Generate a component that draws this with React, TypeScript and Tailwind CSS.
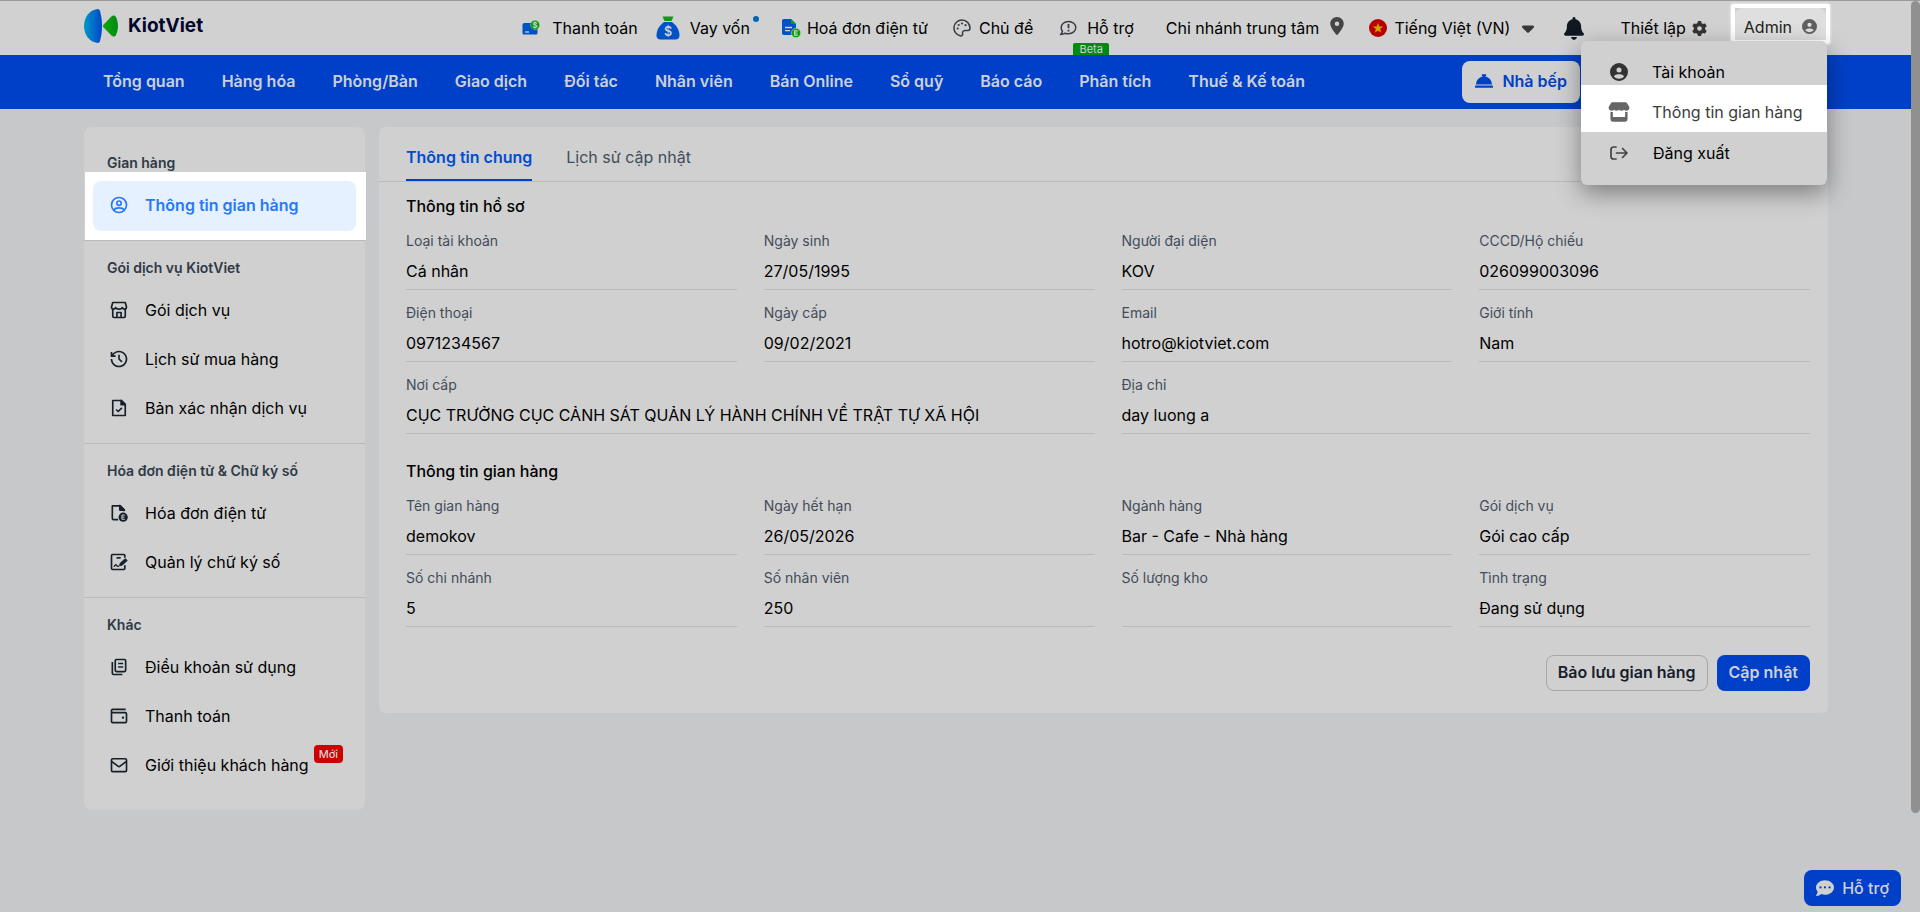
import type { ReactNode } from 'react';
import { FaBell, FaCaretDown, FaCircleUser, FaCommentDots, FaGear, FaLocationDot, FaStore } from 'react-icons/fa6';
import { FaConciergeBell } from 'react-icons/fa';
import { RiHistoryLine } from 'react-icons/ri';

interface LineIconProps {
  children: ReactNode;
  className?: string;
}

function LineIcon({ children, className = 'size-5' }: LineIconProps) {
  return (
    <svg
      viewBox="0 0 24 24"
      className={className}
      fill="none"
      stroke="currentColor"
      strokeWidth="2"
      strokeLinejoin="round"
      aria-hidden="true"
    >
      {children}
    </svg>
  );
}

const icons = {
  account: (
    <LineIcon>
      <circle cx="12" cy="12" r="9" />
      <circle cx="12" cy="9.8" r="2.6" />
      <path d="M5.8 17.8c1.2-1.8 3.4-2.3 6.2-2.3s5 .5 6.2 2.3" />
    </LineIcon>
  ),
  shop: (
    <LineIcon>
      <path d="M4.5 3h15L21 8.5c0 1.5-1 2.5-2.4 2.5S16.400 10 16 9c-.4 1-2 2-4 2s-3.600-1-4-2c-.4 1-1.200 2-2.600 2S3 10 3 8.500z" />
      <path d="M4.500 11v8.500c0 .8.700 1.500 1.500 1.500h12c.8 0 1.500-.7 1.500-1.500V11" />
      <path d="M9.500 21v-6h5v6" />
    </LineIcon>
  ),
  history: <RiHistoryLine className="size-5" />,
  fileCheck: (
    <LineIcon>
      <path d="M4.500 3H15l4.500 4.500V21h-15z" />
      <path d="M14.500 3v5h5z" fill="currentColor" />
      <path d="M8.500 13.800l2.500 2.400 4.500-4.400" />
    </LineIcon>
  ),
  invoice: (
    <LineIcon>
      <path d="M11 20H5.500C4.700 20 4 19.300 4 18.500V3.500h9.500L18 8v2" />
      <path d="M13 3v5.500h5.500z" fill="currentColor" />
      <circle cx="17" cy="17" r="5.500" fill="currentColor" stroke="none" />
      <path d="M19 14.500h-3.500v5H19M15.500 17h3" stroke="#d0d0d0" strokeWidth="1.200" />
    </LineIcon>
  ),
  signature: (
    <LineIcon>
      <path d="M19 7V4.500c0-.8-.5-1.500-1.300-1.500H4.300C3.500 3 3 3.700 3 4.500v15c0 .8.500 1.500 1.300 1.500h13.400c.8 0 1.300-.7 1.300-1.500V16" />
      <path d="M9 7h5" />
      <path d="M6 17.500c1.500-2.500 2.500-2.800 3-1.500s1.200 1.500 3 1" strokeWidth="1.600" />
      <path d="M12.500 16.500l1-3.200 6-5.300 2.500 2.200-6.200 5.600z" fill="currentColor" strokeWidth="1" />
    </LineIcon>
  ),
  terms: (
    <LineIcon>
      <rect x="7.500" y="3" width="12.500" height="14.500" rx="1.500" />
      <path d="M4 6v13.500c0 .8.700 1.500 1.500 1.500H16M11 7.800h6M11 12h6" />
    </LineIcon>
  ),
  wallet: (
    <LineIcon>
      <path d="M20 4H4.500C3.700 4 3 4.700 3 5.500v13c0 .8.700 1.500 1.500 1.500h15c.8 0 1.500-.7 1.500-1.500v-9c0-.8-.7-1.500-1.500-1.500H3" />
      <path d="M15.500 14H18" strokeWidth="2.500" />
    </LineIcon>
  ),
  mail: (
    <LineIcon>
      <rect x="3" y="4.500" width="18" height="15.500" rx="1.500" />
      <path d="M3.500 8l7.200 5.400c.8.600 1.800.6 2.600 0L20.500 8" />
    </LineIcon>
  ),
};

interface MenuItem {
  label: string;
  icon: ReactNode;
  badge?: string;
}

interface MenuGroup {
  title: string;
  items: MenuItem[];
}

const menuGroups: MenuGroup[] = [
  {
    title: 'Gói dịch vụ KiotViet',
    items: [
      { label: 'Gói dịch vụ', icon: icons.shop },
      { label: 'Lịch sử mua hàng', icon: icons.history },
      { label: 'Bản xác nhận dịch vụ', icon: icons.fileCheck },
    ],
  },
  {
    title: 'Hóa đơn điện tử & Chữ ký số',
    items: [
      { label: 'Hóa đơn điện tử', icon: icons.invoice },
      { label: 'Quản lý chữ ký số', icon: icons.signature },
    ],
  },
  {
    title: 'Khác',
    items: [
      { label: 'Điều khoản sử dụng', icon: icons.terms },
      { label: 'Thanh toán', icon: icons.wallet },
      { label: 'Giới thiệu khách hàng', icon: icons.mail, badge: 'Mới' },
    ],
  },
];

const navItems = [
  'Tổng quan',
  'Hàng hóa',
  'Phòng/Bàn',
  'Giao dịch',
  'Đối tác',
  'Nhân viên',
  'Bán Online',
  'Sổ quỹ',
  'Báo cáo',
  'Phân tích',
  'Thuế & Kế toán',
];

interface Field {
  label: string;
  value: string;
  wide?: boolean;
}

const profileFields: Field[] = [
  { label: 'Loại tài khoản', value: 'Cá nhân' },
  { label: 'Ngày sinh', value: '27/05/1995' },
  { label: 'Người đại diện', value: 'KOV' },
  { label: 'CCCD/Hộ chiếu', value: '026099003096' },
  { label: 'Điện thoại', value: '0971234567' },
  { label: 'Ngày cấp', value: '09/02/2021' },
  { label: 'Email', value: 'hotro@kiotviet.com' },
  { label: 'Giới tính', value: 'Nam' },
  { label: 'Nơi cấp', value: 'CỤC TRƯỞNG CỤC CẢNH SÁT QUẢN LÝ HÀNH CHÍNH VỀ TRẬT TỰ XÃ HỘI', wide: true },
  { label: 'Địa chỉ', value: 'day luong a', wide: true },
];

const storeFields: Field[] = [
  { label: 'Tên gian hàng', value: 'demokov' },
  { label: 'Ngày hết hạn', value: '26/05/2026' },
  { label: 'Ngành hàng', value: 'Bar - Cafe - Nhà hàng' },
  { label: 'Gói dịch vụ', value: 'Gói cao cấp' },
  { label: 'Số chi nhánh', value: '5' },
  { label: 'Số nhân viên', value: '250' },
  { label: 'Số lượng kho', value: '' },
  { label: 'Tình trạng', value: 'Đang sử dụng' },
];

function FieldGrid({ fields }: { fields: Field[] }) {
  return (
    <dl className="grid grid-cols-4 gap-x-[27px]">
      {fields.map((field) => (
        <div
          key={field.label}
          className={`border-b border-[#bababb] pt-[13px] pb-[6px] ${field.wide ? 'col-span-2' : ''}`}
        >
          <dt className="text-sm leading-5 text-[#424c5a]">{field.label}</dt>
          <dd className="mt-2 h-6 leading-6">{field.value}</dd>
        </div>
      ))}
    </dl>
  );
}

function Logo() {
  return (
    <a href="#" className="flex items-center gap-[10px]">
      <svg viewBox="0 0 34 34" className="size-[34px]" aria-hidden="true">
        <defs>
          <linearGradient id="logo-blue" x1="0" y1="0" x2="1" y2="0">
            <stop offset="0" stopColor="#0098c8" />
            <stop offset="1" stopColor="#0046c8" />
          </linearGradient>
          <linearGradient id="logo-green" x1="0" y1="0" x2="1" y2="0">
            <stop offset="0" stopColor="#0aa80c" />
            <stop offset="1" stopColor="#058a10" />
          </linearGradient>
        </defs>
        <path d="M13.500 0C5.500 1 0 8 0 17s5.500 16 13.500 17c1.500 0 2-.8 2.500-2 2.700-9.500 2.700-20.500 0-30-.5-1.200-1-2-2.500-2z" fill="url(#logo-blue)" />
        <path d="M19.400 15.700l8-8.300c1.700-1.500 3.600-1.100 4.600.6 2.600 5.500 2.600 12.500 0 18-1 1.700-2.900 2.100-4.600.6l-8-8.300c-.7-.8-.7-1.800 0-2.600z" fill="url(#logo-green)" />
      </svg>
      <span className="text-[19px] leading-6 font-bold text-[#02062c]">KiotViet</span>
    </a>
  );
}

function PaymentIcon() {
  return (
    <svg viewBox="0 0 18 16" className="h-4 w-[18px]" aria-hidden="true">
      <path d="M2.500 3H9a4.600 4.600 0 0 0 6.500 6V13c0 1-.5 1.500-1.500 1.500H2c-1 0-1.500-.5-1.500-1.500V5c0-1.200.8-2 2-2z" fill="#0052c6" />
      <path d="M3 12h4" stroke="#d0d0d0" strokeWidth="1.300" />
      <circle cx="13" cy="5" r="4.500" fill="#0a9c12" />
      <text x="13" y="7.800" fontSize="7.500" fontWeight="700" textAnchor="middle" fill="#d0d0d0">$</text>
    </svg>
  );
}

function MoneyBagIcon() {
  return (
    <svg viewBox="0 0 24 24" className="size-6" aria-hidden="true">
      <path d="M6.500.5h11L15.500 5h-7z" fill="#0a9c12" />
      <path d="M8 6h8c5 3.500 7.500 8.500 7.500 13.500 0 2.700-1.500 4-4 4h-15c-2.500 0-4-1.300-4-4C.5 14.500 3 9.500 8 6z" fill="#0052c6" />
      <text x="12" y="19.500" fontSize="12.500" fontWeight="600" textAnchor="middle" fill="#d0d0d0">$</text>
    </svg>
  );
}

function InvoiceIcon() {
  return (
    <svg viewBox="0 0 20 20" className="size-5" aria-hidden="true">
      <path d="M3 1h7l5 5v7l-3 4H3c-1.500 0-2-.8-2-2V3c0-1.200.5-2 2-2z" fill="#0052c6" />
      <path d="M10 1l5 5h-5z" fill="#0a9c12" />
      <path d="M4 9.500h7M4 12.700h5" stroke="#d0d0d0" strokeWidth="1.300" />
      <circle cx="15" cy="15" r="4.700" fill="#0a9c12" stroke="#d0d0d0" strokeWidth=".6" />
      <path d="M16.800 12.900h-3.200v4.200h3.200M13.600 15h2.800" stroke="#d0d0d0" strokeWidth="1.100" fill="none" />
    </svg>
  );
}

function PaletteIcon() {
  return (
    <svg viewBox="0 0 18 18" className="size-[18px]" fill="none" stroke="#383d42" strokeWidth="1.500" aria-hidden="true">
      <path d="M9 1a8 8 0 0 0-1.800 15.800c1.600.4 2.600-.7 2.400-2-.3-1.900.5-3.300 2.300-3.400h3c1.200 0 2.100-.8 2.100-2.200C16.900 4.600 13.500 1 9 1z" />
      <g fill="#383d42" stroke="none">
        <circle cx="4.700" cy="9.500" r="1.100" />
        <circle cx="5.700" cy="6" r="1.100" />
        <circle cx="9" cy="4.500" r="1.100" />
        <circle cx="12.500" cy="6.200" r="1.100" />
      </g>
    </svg>
  );
}

function SupportIcon() {
  return (
    <svg viewBox="0 0 18 16" className="h-4 w-[18px]" fill="none" stroke="#383d42" strokeWidth="1.500" aria-hidden="true">
      <path d="M9.500 1.500c4.200 0 7.300 2.600 7.300 6s-3.100 6.300-7.300 6.300c-1.200 0-2.200-.2-3.200-.6-1.300.8-2.900 1.300-4.800 1.300 1-.8 1.700-2 1.900-3.200C2.600 10.200 2.200 8.900 2.200 7.500c0-3.400 3.100-6 7.300-6z" strokeLinejoin="round" />
      <path d="M9.500 4v4.200M9.500 9.700v1.800" strokeWidth="1.800" />
    </svg>
  );
}

function FlagIcon() {
  return (
    <svg viewBox="0 0 18 18" className="size-[18px]" aria-hidden="true">
      <circle cx="9" cy="9" r="9" fill="#b90000" />
      <path d="M9 3.800l1.300 3.700h3.900l-3.100 2.400 1.100 3.800L9 11.400l-3.200 2.300 1.100-3.800-3.100-2.400h3.900z" fill="#d6a400" />
    </svg>
  );
}

function LogoutIcon() {
  return (
    <svg viewBox="0 0 20 16" className="h-4 w-5" fill="none" stroke="#444" strokeWidth="1.700" strokeLinecap="round" strokeLinejoin="round" aria-hidden="true">
      <path d="M7 2H4.500C3 2 2 3 2 4.500v7C2 13 3 14 4.500 14H7M7.500 8H18M13.500 3.500L18 8l-4.500 4.500" />
    </svg>
  );
}

function UserMenu() {
  return (
    <div className="relative z-20 -mr-[2px] ml-6">
      <div className="h-10 rounded-xs border-4 border-white shadow-[0_0_2px_1px_rgba(255,255,255,0.5)]">
        <button type="button" className="flex h-8 w-full items-center gap-[10px] rounded-t-lg bg-[#dfdfdf] px-[9px] pt-[5px] leading-6 text-[#222]">
          Admin
          <FaCircleUser className="size-[15px] text-[#606060]" />
        </button>
      </div>
      <div className="absolute top-[37px] right-[3px] w-[246px] rounded-md bg-[#d0d0d0] pt-[3px] pb-[11px] shadow-[0_8px_24px_rgba(0,0,0,0.4)]">
        <a href="#" className="flex h-[41px] items-center gap-6 pt-[14px] pl-[29px]">
          <FaCircleUser className="size-[18px] text-[#333]" />
          <span className="leading-6">Tài khoản</span>
        </a>
        <a href="#" className="flex h-[47px] items-center gap-[22px] bg-white pt-[6px] pl-[27px] text-[#3c3c3c]">
          <FaStore className="h-5 w-[22px] text-[#666]" />
          <span className="leading-6">Thông tin gian hàng</span>
        </a>
        <a href="#" className="flex h-[42px] items-center gap-6 pl-7">
          <LogoutIcon />
          <span className="leading-6">Đăng xuất</span>
        </a>
      </div>
    </div>
  );
}

function TopBar() {
  return (
    <header className="flex h-[55px] items-center justify-between border-t border-[#9a9a9a] bg-[#d1d1d1] pr-[92px] pl-[84px]">
      <div className="pb-1">
        <Logo />
      </div>
      <div className="flex h-full items-center whitespace-nowrap">
        <a href="#" className="flex items-center gap-3">
          <PaymentIcon />
          Thanh toán
        </a>
        <a href="#" className="relative ml-[18px] flex items-center gap-[10px]">
          <MoneyBagIcon />
          Vay vốn
          <span className="absolute top-0 -right-[9px] size-[6px] rounded-full bg-[#0067b5]" />
        </a>
        <a href="#" className="ml-[31px] flex items-center gap-[6px]">
          <InvoiceIcon />
          Hoá đơn điện tử
        </a>
        <a href="#" className="ml-[25px] flex items-center gap-2">
          <PaletteIcon />
          Chủ đề
        </a>
        <a href="#" className="relative ml-[26px] flex h-full items-center gap-[10px]">
          <SupportIcon />
          Hỗ trợ
          <span className="absolute bottom-0 left-[14px] h-3 w-9 rounded-t-xs bg-[#058a10] text-center text-[11px] leading-3 text-[#d0d0d0]">
            Beta
          </span>
        </a>
        <button type="button" className="ml-8 flex items-center gap-[11px]">
          Chi nhánh trung tâm
          <FaLocationDot className="mb-1 h-[18px] w-[14px] text-[#444]" />
        </button>
        <button type="button" className="ml-[25px] flex items-center gap-[7px]">
          <FlagIcon />
          Tiếng Việt (VN)
          <FaCaretDown className="ml-[5px] h-5 w-3 text-[#383838]" />
        </button>
        <button type="button" aria-label="Thông báo" className="ml-[30px]">
          <FaBell className="h-[23px] w-5 text-[#101820]" />
        </button>
        <button type="button" className="ml-9 flex items-center gap-[6px]">
          Thiết lập
          <FaGear className="size-[15px] text-[#333]" />
        </button>
        <div className="pb-2">
          <UserMenu />
        </div>
      </div>
    </header>
  );
}

function NavBar() {
  return (
    <nav className="flex h-[54px] items-center bg-[#0040c8] pr-[92px] pl-[103px] font-semibold text-[#cdd0d8]">
      <div className="flex gap-[37px] pb-0.5">
        {navItems.map((item) => (
          <a key={item} href="#" className="leading-6">
            {item}
          </a>
        ))}
      </div>
      <a href="#" className="mr-[248px] ml-auto flex h-[42px] items-center gap-[9px] rounded-lg bg-[#d0d0d0] px-[13px] pb-0.5 text-[#0040c8]">
        <FaConciergeBell className="size-[18px]" />
        Nhà bếp
      </a>
    </nav>
  );
}

function Sidebar() {
  return (
    <aside className="w-[281px] shrink-0 rounded-lg bg-[#d0d0d0] pb-[10px]">
      <h2 className="h-[45px] pt-[26px] pl-[23px] text-sm leading-5 font-semibold text-[#2f3a46]">Gian hàng</h2>
      <div className="-mr-px ml-px bg-white py-[9px] pr-[10px] pl-2">
        <a href="#" className="flex h-[50px] items-center gap-4 rounded-lg bg-[#e5f1ff] pb-0.5 pl-4 font-semibold text-[#2878fa]">
          {icons.account}
          Thông tin gian hàng
        </a>
      </div>
      {menuGroups.map((group) => (
        <section key={group.title} className="border-t border-[#bababb] pb-[11px]">
          <h2 className="pt-[17px] pb-[7px] pl-[23px] text-sm leading-5 font-semibold text-[#2f3a46]">{group.title}</h2>
          {group.items.map((item) => (
            <a key={item.label} href="#" className="flex h-[49px] items-center gap-4 pl-[25px]">
              <span className="text-[#16202b]">{item.icon}</span>
              <span className="relative">
                {item.label}
                {item.badge && (
                  <span className="absolute -top-2 left-full ml-[5px] rounded-sm bg-[#cf0000] px-[5px] text-[11px] leading-[18px] font-medium text-[#d8d0d0]">
                    {item.badge}
                  </span>
                )}
              </span>
            </a>
          ))}
        </section>
      ))}
    </aside>
  );
}

function StoreInfo() {
  return (
    <main className="min-w-0 flex-1 rounded-md bg-[#d0d0d0] pb-[22px]">
      <div className="flex h-[55px] gap-[34px] border-b border-[#bababb] pl-[27px]">
        <button type="button" className="border-b-2 border-[#0040c8] pt-2 font-semibold text-[#004cd0]">
          Thông tin chung
        </button>
        <button type="button" className="border-b-2 border-transparent pt-2 text-[#424c5a]">
          Lịch sử cập nhật
        </button>
      </div>
      <div className="pr-[18px] pl-[27px]">
        <h3 className="mt-3 leading-6 font-medium">Thông tin hồ sơ</h3>
        <FieldGrid fields={profileFields} />
        <h3 className="mt-[25px] leading-6 font-medium">Thông tin gian hàng</h3>
        <FieldGrid fields={storeFields} />
        <div className="mt-7 flex justify-end gap-[9px] font-semibold">
          <button type="button" className="h-9 rounded-lg border border-[#a5a7ab] px-[11px] pb-0.5 text-[#16202b]">
            Bảo lưu gian hàng
          </button>
          <button type="button" className="h-9 rounded-lg bg-[#0040c8] px-3 pb-0.5 text-[#cdd0d8]">
            Cập nhật
          </button>
        </div>
      </div>
    </main>
  );
}

export default function App() {
  return (
    <div className="min-h-screen bg-[#c7c8ca] font-['Inter','Liberation_Sans',sans-serif] text-base text-black">
      <TopBar />
      <NavBar />
      <div className="flex items-start gap-[14px] pt-[18px] pr-[92px] pl-[84px]">
        <Sidebar />
        <StoreInfo />
      </div>
      <button type="button" className="fixed right-[19px] bottom-[6px] flex h-9 items-center gap-2 rounded-lg bg-[#0040c8] px-3 font-medium text-[#d0d0d0]">
        <FaCommentDots className="size-[18px]" />
        Hỗ trợ
      </button>
      <div className="fixed top-px right-0 h-[89%] w-[9px] rounded-full bg-[#909090]" />
    </div>
  );
}
